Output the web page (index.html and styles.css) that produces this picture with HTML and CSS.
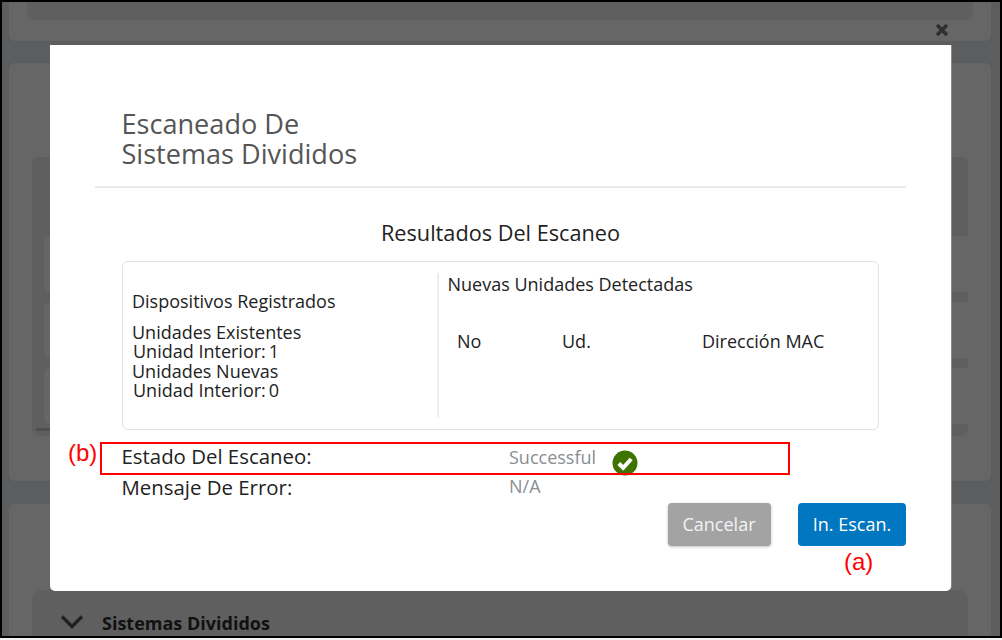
FILE: index.html
```html
<!DOCTYPE html>
<html lang="es">
<head>
<meta charset="utf-8">
<title>Escaneado De Sistemas Divididos</title>
<link rel="stylesheet" href="styles.css">
</head>
<body>
<div class="screen">
  <div class="backdrop">
    <section class="card card-top"><div class="top-inner"></div></section>
    <section class="card card-main">
      <div class="main-inner">
        <div class="main-head"></div>
        <div class="panel"></div>
        <div class="panel"></div>
        <div class="panel"></div>
        <div class="tick"></div>
      </div>
    </section>
    <section class="card card-bottom">
      <div class="bottom-inner">
        <svg class="chevron" width="24" height="16" viewBox="0 0 24 16"><path d="M2 2.5 12 12.5 22 2.5" fill="none" stroke="#222" stroke-width="3.4"/></svg>
        <span class="bottom-title">Sistemas Divididos</span>
      </div>
    </section>
    <svg class="close" width="14" height="14" viewBox="0 0 14 14"><path d="M2 2 12 12M12 2 2 12" stroke="#2f2f2f" stroke-width="3.4"/></svg>
  </div>

  <div class="modal">
    <h1 class="title">Escaneado De<br>Sistemas Divididos</h1>
    <div class="rule"></div>
    <h2 class="subtitle">Resultados Del Escaneo</h2>
    <div class="results">
      <div class="col-left">
        <div class="reg">Dispositivos Registrados</div>
        <div class="line">Unidades Existentes</div>
        <div class="line indent">Unidad Interior:<span class="num">1</span></div>
        <div class="line">Unidades Nuevas</div>
        <div class="line indent">Unidad Interior:<span class="num">0</span></div>
      </div>
      <div class="col-right">
        <div class="new-title">Nuevas Unidades Detectadas</div>
        <div class="heads"><span>No</span><span>Ud.</span><span>Dirección MAC</span></div>
      </div>
    </div>
    <div class="status">
      <div class="label">Estado Del Escaneo:</div>
      <div class="value">Successful
        <svg class="ok" width="26" height="26" viewBox="0 0 26 26"><circle cx="13" cy="13" r="12.5" fill="#3f7300"/><path d="M6.8 13.5 11.2 17.8 19.2 9" fill="none" stroke="#fff" stroke-width="4"/></svg>
      </div>
      <div class="label">Mensaje De Error:</div>
      <div class="value value-na">N/A</div>
    </div>
    <div class="actions">
      <button class="btn btn-gray">Cancelar</button>
      <button class="btn btn-blue">In. Escan.</button>
    </div>
    <div class="mark-box"></div>
    <span class="mark mark-b">(b)</span>
    <span class="mark mark-a">(a)</span>
  </div>
</div>
</body>
</html>
```
FILE: styles.css
```css
* { box-sizing: border-box; }
html, body { margin: 0; padding: 0; background: #f2f2f2; }
.screen { position: relative; width: 1002px; height: 640px; overflow: hidden; font-family: "Open Sans", sans-serif; }
.backdrop { height: 638px; border: 2px solid #000; background: #5c5d5f; padding: 0 9px 0 7px; overflow: hidden; position: relative; }
.card { background: #666; border-radius: 6px; padding: 0 23px; margin-bottom: 23px; }
.card-top { height: 39px; padding: 0 18px; border-radius: 0 0 6px 6px; margin-bottom: 22px; }
.top-inner { height: 18px; background: #5f5f5f; border-radius: 0 0 6px 6px; }
.card-main { height: 418px; padding-top: 94px; }
.main-inner { position: relative; height: 279px; background: #5f5f5f; border-radius: 6px; padding-left: 12px; }
.main-head { height: 79px; }
.panel { height: 56px; margin-bottom: 10px; background: #666; border-radius: 6px 0 0 6px; }
.tick { position: absolute; left: 4px; top: 271px; width: 40px; height: 3px; background: #4f4f4f; }
.card-bottom { height: 200px; padding-top: 86px; }
.bottom-inner { height: 100px; background: #5f5f5f; border-radius: 10px 10px 0 0; display: flex; align-items: flex-start; padding: 22px 0 0 28px; }
.chevron { margin-top: 2px; }
.bottom-title { margin-left: 18px; font-size: 18px; font-weight: 700; color: #111; line-height: 22px; }
.close { position: absolute; left: 933px; top: 21px; }
.modal { position: absolute; left: 50px; top: 45px; width: 901px; height: 546px; background: #fff; border-radius: 0 0 5px 5px; padding: 0 45px; box-shadow: 1px 0 0 #8a8a8a; }
.title { margin: 64px 0 0 26.5px; font-size: 27.1px; line-height: 30px; font-weight: 400; color: #555; }
.rule { height: 2px; background: #eaeaea; margin-top: 17px; }
.subtitle { margin: 31px 0 0; font-size: 21.7px; line-height: 28px; font-weight: 400; color: #222; text-align: center; }
.results { display: flex; width: 757px; height: 169px; margin: 14px 0 0 27px; border: 1px solid #e2e2e2; border-radius: 6px; padding: 11px 0 12px; color: #222; font-size: 18px; line-height: 19px; }
.col-left { width: 316px; padding: 18px 0 0 9px; border-right: 2px solid #eee; }
.reg { margin-bottom: 11px; line-height: 21px; }
.line { line-height: 19.3px; }
.indent { padding-left: 1px; }
.num { margin-left: 3px; }
.col-right { flex: 1; padding-left: 8.5px; }
.new-title { line-height: 22px; }
.heads { display: grid; grid-template-columns: 105px 140px auto; margin-top: 35px; padding-left: 9.5px; line-height: 22px; }
.status { display: grid; grid-template-columns: 387.5px auto; margin: 15px 0 0 26.5px; color: #222; font-size: 20.4px; }
.label { height: 31px; line-height: 23px; }
.value { display: flex; color: #8b8e93; font-size: 18px; line-height: 25px; }
.value-na { line-height: 21px; }
.ok { margin: 5px 0 0 16px; }
.actions { display: flex; justify-content: flex-end; gap: 27px; margin-top: -4px; }
.btn { height: 43px; border: 0; border-radius: 4px; color: #fff; font: 18px "Open Sans", sans-serif; padding: 0 0 2px; }
.btn-gray { width: 103px; background: #a3a3a3; color: #f3f3f3; box-shadow: 0 1px 3px rgba(0,0,0,.25); padding-right: 1px; }
.btn-blue { width: 108px; background: #0077c0; }
.mark-box { position: absolute; left: 50px; top: 397px; width: 690px; height: 33px; border: 2px solid #f00; }
.mark { position: absolute; color: #f00; font-family: "Liberation Sans", sans-serif; font-size: 24px; line-height: 26px; }
.mark-b { left: 18px; top: 395px; }
.mark-a { left: 794px; top: 504px; }
```
